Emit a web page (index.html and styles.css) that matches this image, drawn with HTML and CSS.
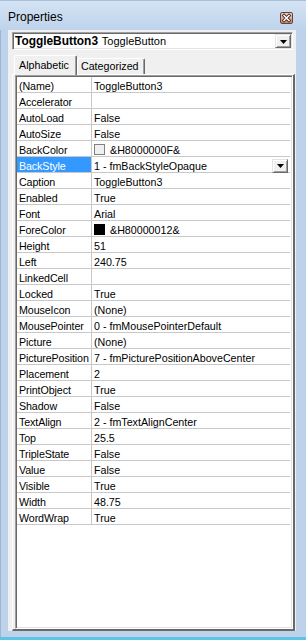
FILE: index.html
```html
<!DOCTYPE html>
<html lang="en">
<head>
    <meta charset="UTF-8">
    <meta name="viewport" content="width=device-width, initial-scale=1.0">
    <title>Properties</title>
    <link rel="stylesheet" href="styles.css">
</head>
<body>
    <div class="window">
        <!-- Title bar -->
        <div class="titlebar">
            <span class="title">Properties</span>
            <span class="close-btn">
                <svg width="11" height="10" viewBox="0 0 11 10">
                    <path d="M3 2.5 L8 7.5 M8 2.5 L3 7.5" stroke="#4a2a22" stroke-width="3.2" stroke-linecap="square"/>
                    <path d="M3 2.5 L8 7.5 M8 2.5 L3 7.5" stroke="#ffffff" stroke-width="1.5" stroke-linecap="square"/>
                </svg>
            </span>
        </div>

        <div class="client">
            <!-- Object selector -->
            <div class="combo">
                <span class="combo-text"><b>ToggleButton3</b> ToggleButton</span>
                <span class="drop-btn">
                    <svg width="7" height="4" viewBox="0 0 7 4"><path d="M0 0 H7 L3.5 4 Z" fill="#000"/></svg>
                </span>
            </div>

            <!-- Tabs -->
            <div class="tabs">
                <span class="tab active">Alphabetic</span>
                <span class="tab">Categorized</span>
            </div>

            <!-- Property grid -->
            <div class="panel">
                <div class="grid">
                    <div class="row"><span class="name">(Name)</span><span class="value">ToggleButton3</span></div>
                    <div class="row"><span class="name">Accelerator</span><span class="value"></span></div>
                    <div class="row"><span class="name">AutoLoad</span><span class="value">False</span></div>
                    <div class="row"><span class="name">AutoSize</span><span class="value">False</span></div>
                    <div class="row"><span class="name">BackColor</span><span class="value"><span class="swatch light"></span>&amp;H8000000F&amp;</span></div>
                    <div class="row selected">
                        <span class="name">BackStyle</span>
                        <span class="value">1 - fmBackStyleOpaque
                            <span class="drop-btn small">
                                <svg width="7" height="4" viewBox="0 0 7 4"><path d="M0 0 H7 L3.5 4 Z" fill="#000"/></svg>
                            </span>
                        </span>
                    </div>
                    <div class="row"><span class="name">Caption</span><span class="value">ToggleButton3</span></div>
                    <div class="row"><span class="name">Enabled</span><span class="value">True</span></div>
                    <div class="row"><span class="name">Font</span><span class="value">Arial</span></div>
                    <div class="row"><span class="name">ForeColor</span><span class="value"><span class="swatch dark"></span>&amp;H80000012&amp;</span></div>
                    <div class="row"><span class="name">Height</span><span class="value">51</span></div>
                    <div class="row"><span class="name">Left</span><span class="value">240.75</span></div>
                    <div class="row"><span class="name">LinkedCell</span><span class="value"></span></div>
                    <div class="row"><span class="name">Locked</span><span class="value">True</span></div>
                    <div class="row"><span class="name">MouseIcon</span><span class="value">(None)</span></div>
                    <div class="row"><span class="name">MousePointer</span><span class="value">0 - fmMousePointerDefault</span></div>
                    <div class="row"><span class="name">Picture</span><span class="value">(None)</span></div>
                    <div class="row"><span class="name">PicturePosition</span><span class="value">7 - fmPicturePositionAboveCenter</span></div>
                    <div class="row"><span class="name">Placement</span><span class="value">2</span></div>
                    <div class="row"><span class="name">PrintObject</span><span class="value">True</span></div>
                    <div class="row"><span class="name">Shadow</span><span class="value">False</span></div>
                    <div class="row"><span class="name">TextAlign</span><span class="value">2 - fmTextAlignCenter</span></div>
                    <div class="row"><span class="name">Top</span><span class="value">25.5</span></div>
                    <div class="row"><span class="name">TripleState</span><span class="value">False</span></div>
                    <div class="row"><span class="name">Value</span><span class="value">False</span></div>
                    <div class="row"><span class="name">Visible</span><span class="value">True</span></div>
                    <div class="row"><span class="name">Width</span><span class="value">48.75</span></div>
                    <div class="row"><span class="name">WordWrap</span><span class="value">True</span></div>
                </div>
            </div>
        </div>
    </div>
    <div class="screen-edge"></div>
</body>
</html>
```

FILE: styles.css
```css
:root {
    --frame-color: #bed3eb;
    --face-color: #f0f0f0;
    --shadow-color: #a0a0a0;
    --dark-shadow: #696969;
    --light-color: #e3e3e3;
    --grid-line: #c8c8c8;
    --select-color: #3399ff;
}

* {
    margin: 0;
    padding: 0;
    box-sizing: border-box;
    font-family: 'Liberation Sans', Arial, sans-serif;
}

body {
    width: 306px;
    height: 640px;
    overflow: hidden;
    font-size: 10.7px;
    color: #000;
}

.window {
    height: 637px;
    display: flex;
    flex-direction: column;
    background-color: var(--frame-color);
    padding: 0 10px 6px 8px;
    box-shadow: inset 1px 0 #9db6d2;
}

.titlebar {
    height: 30px;
    display: flex;
    justify-content: space-between;
    align-items: flex-start;
    margin: 0 -10px 0 -8px;
    padding: 0 13px 0 8px;
    background: linear-gradient(#d4e3f4, #bed3eb);
    border-top: 1px solid #a9c0db;
}

.title {
    font-size: 12px;
    line-height: 14px;
    margin-top: 9px;
}

.close-btn {
    width: 13px;
    height: 12px;
    margin-top: 11px;
    display: flex;
    justify-content: center;
    align-items: center;
    border: 1px solid #6b4036;
    border-radius: 2px;
    background: linear-gradient(#ecd0c4, #c58a78);
}

.client {
    flex: 1;
    display: flex;
    flex-direction: column;
    background-color: var(--face-color);
    padding: 2px 1px 0 4px;
}

.combo {
    width: 281px;
    height: 18px;
    display: flex;
    justify-content: space-between;
    align-items: center;
    background-color: white;
    border: 1px solid;
    border-color: var(--shadow-color) white white var(--shadow-color);
    box-shadow: inset 1px 1px var(--dark-shadow), inset -1px -1px var(--light-color);
    padding: 1px 1px 1px 2px;
}

.combo-text {
    white-space: nowrap;
    font-size: 11px;
}

.combo-text b {
    font-size: 11.9px;
    margin-right: 1px;
}

.drop-btn {
    width: 16px;
    height: 14px;
    display: flex;
    justify-content: center;
    align-items: center;
    background-color: var(--face-color);
    border: 1px solid;
    border-color: var(--light-color) var(--dark-shadow) var(--dark-shadow) var(--light-color);
    box-shadow: inset 1px 1px white, inset -1px -1px var(--shadow-color);
}

.drop-btn svg {
    margin-top: 1px;
}

.drop-btn.small {
    margin-right: 2px;
}

.tabs {
    display: flex;
    align-items: flex-end;
    height: 20px;
    margin-top: 5px;
    margin-bottom: -1px;
    padding-left: 2px;
    position: relative;
    z-index: 1;
}

.tab {
    height: 16px;
    line-height: 15px;
    padding: 0 5px 0 3px;
    background-color: var(--face-color);
    border: 1px solid white;
    border-right-color: var(--dark-shadow);
    border-bottom: none;
    border-radius: 2px 2px 0 0;
    box-shadow: inset -1px 0 var(--shadow-color);
    margin-bottom: 1px;
}

.tab.active {
    height: 20px;
    line-height: 18px;
    padding: 0 7px 0 4px;
    margin-bottom: 0;
}

.panel {
    flex: 1;
    display: flex;
    flex-direction: column;
    width: 283px;
    border: 1px solid white;
    border-right: 2px solid var(--dark-shadow);
    border-bottom: 2px solid var(--dark-shadow);
    padding: 0 0 0 2px;
}

.grid {
    flex: 1;
    background-color: white;
    border: 1px solid;
    border-color: var(--shadow-color) white white var(--shadow-color);
    box-shadow: inset 1px 1px var(--dark-shadow), inset -1px -1px var(--light-color);
    padding: 1px 2px 1px 1px;
}

.row {
    display: flex;
    height: 16px;
    border-bottom: 1px solid var(--grid-line);
    line-height: 14px;
    white-space: nowrap;
}

.name {
    width: 75px;
    padding: 2px 0 0 2px;
    border-right: 1px solid var(--grid-line);
    overflow: hidden;
    letter-spacing: -0.1px;
}

.value {
    flex: 1;
    display: flex;
    align-items: center;
    justify-content: space-between;
    padding: 2px 0 0 2px;
}

.row .value:has(.swatch) {
    justify-content: flex-start;
}

.selected .name {
    background-color: var(--select-color);
    color: white;
}

.swatch {
    width: 11px;
    height: 11px;
    margin-right: 5px;
    border: 1px solid #808080;
}

.swatch.light {
    background-color: var(--face-color);
}

.swatch.dark {
    background-color: black;
    border-color: black;
}

.screen-edge {
    height: 3px;
    background-color: #5cc4e4;
}
```
